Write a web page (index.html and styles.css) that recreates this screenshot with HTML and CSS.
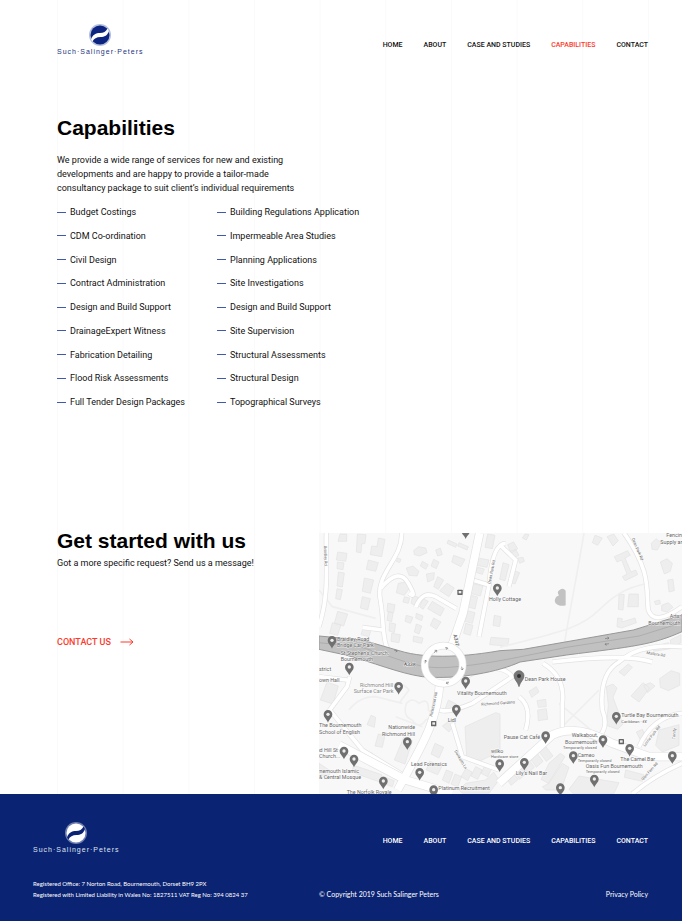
FILE: index.html
```html
<!DOCTYPE html>
<html lang="en">
<head>
<meta charset="utf-8">
<title>Capabilities – Such Salinger Peters</title>
<meta name="viewport" content="width=device-width, initial-scale=1">
<link rel="stylesheet" href="styles.css">
</head>
<body>
<div class="page">
  <header class="header">
    <a class="logo" href="#">
      <svg class="logo-mark" viewBox="0 0 44 44" aria-hidden="true">
        <circle class="logo-halo" cx="22" cy="22" r="22"/>
        <circle class="logo-disc" cx="22" cy="22" r="19"/>
        <path class="logo-wave" d="M4 31C7 21 14 18 22 18C29 18 34 15 37 9L40 14C37 23 31 26 23 26C15 26 10 29 7 35Z"/>
      </svg>
      <span class="logo-name">Such·Salinger·Peters</span>
    </a>
    <nav class="nav" aria-label="Main">
      <a href="#">HOME</a>
      <a href="#">ABOUT</a>
      <a href="#">CASE AND STUDIES</a>
      <a class="active" href="#" aria-current="page">CAPABILITIES</a>
      <a href="#">CONTACT</a>
    </nav>
  </header>

  <main>
    <section class="capabilities">
      <h1>Capabilities</h1>
      <p class="intro">We provide a wide range of services for new and existing developments and are happy to provide a tailor-made consultancy package to suit client’s individual requirements</p>
      <div class="lists">
        <ul class="list">
          <li>Budget Costings</li>
          <li>CDM Co-ordination</li>
          <li>Civil Design</li>
          <li>Contract Administration</li>
          <li>Design and Build Support</li>
          <li>DrainageExpert Witness</li>
          <li>Fabrication Detailing</li>
          <li>Flood Risk Assessments</li>
          <li>Full Tender Design Packages</li>
        </ul>
        <ul class="list">
          <li>Building Regulations Application</li>
          <li>Impermeable Area Studies</li>
          <li>Planning Applications</li>
          <li>Site Investigations</li>
          <li>Design and Build Support</li>
          <li>Site Supervision</li>
          <li>Structural Assessments</li>
          <li>Structural Design</li>
          <li>Topographical Surveys</li>
        </ul>
      </div>
    </section>

    <section class="start">
      <div class="start-text">
        <h2>Get started with us</h2>
        <p>Got a more specific request? Send us a message!</p>
        <a class="contact" href="#">CONTACT US
          <svg class="arrow" viewBox="0 0 28 16" aria-hidden="true"><path d="M1 8H26M19 2L26 8L19 14"/></svg>
        </a>
      </div>
      <svg class="map" viewBox="0 9 1089 783" role="img" aria-label="Map of Bournemouth around Dean Park House">
        <defs>
          <g id="pin"><path d="M0 24C-3 14-13 10-13-1A13 13 0 0 1 13-1C13 10 3 14 0 24Z"/><circle r="5" cy="-1" fill="#eee"/></g>
          <g id="stop"><rect x="-8" y="-8" width="16" height="16" rx="2" fill="#666"/><rect x="-4" y="-4" width="8" height="7" fill="#eee"/></g>
        </defs>
        <rect class="land" y="9" width="1089" height="783"/>

        <g class="buildings">
          <path d="M63 12h20v22h-26zM115 12l26 2-3 26-10 2-2 26-14-2zM158 48l16 2 4-26 20 4-10 52-34-6zM56 66l28 4-4 24-28-4zM55 96l20 3-3 20-18-3zM148 90l30 8-8 26-28-6zM58 126l18 3-6 42-16-3zM136 144l28 6-10 40-24-6zM54 176l16 3-6 30-14-3zM130 200l24 6-8 34-22-6zM56 244l30 8-12 36-28-8zM40 278l26 6-10 32-24-6zM134 288l24 6-8 26-24-6zM284 62l14-12 22 4 4 14-22 10-16-4zM350 60l14-6 6 20-14 4zM388 30l26 12-4 10-26-12zM420 38l28 12-4 10-28-12zM404 76l34 12-12 22-28-14zM236 84l10 4-4 10-10-4zM262 114l20-6 18 16-6 14-24-2zM310 94l18 10-8 14-16-10zM344 88l16 8-8 20-16-8zM322 132l24-4-2 20-18 8zM356 140l18 10-16 28-14-8zM384 160l22 14-16 26-28-18zM238 160l22-4 10 20-14 20-24-8zM282 196l16 6-6 26-16-8zM256 200l16 4-4 16-16-4zM312 206l16 8-16 24-10-8zM340 214l36 22-12 22-38-22zM206 220l22 4-4 24-20-4zM208 246l14 3-4 26-14-4zM262 256l20 6-8 18-16-6zM292 250l20 8-4 14-18-8zM212 278l18 4-4 26-16-5zM292 282l16 6-8 24-14-6zM344 264l22 12-14 22-18-12zM218 310l26 4-4 24-24-4zM284 318l28 6-4 16-26-6zM506 12l22 4-8 40-22-4zM478 84l32 6-6 22-30-6zM476 112l20 5-6 16-20-6zM460 160l32 8-8 30-30-8zM456 196l20 5-8 36-20-6zM446 242l22 6-8 32-22-6zM440 280l22 6-8 30-20-6zM526 256l20 4-4 30-20-4zM516 322l54 4-4 22-54-4z"/>
          <path d="M618 12l12 2-8 16-12-6zM566 44l18-8 12 20-20 14zM574 64l16-6 10 18-18 8zM596 84l16-2 4 12-14 6zM552 98l18 6-12 48-16-4zM584 122l18 6-14 34-16-6zM828 16l22 8-14 22-16-8zM864 20l20-8 14 20-16 16zM886 80l40-18 8 14-16 8 18 42 14-6 6 14-38 18-8-12 14-8-16-42-14 6zM997 40l14-14 16 12-12 22-16-2zM1024 96l20-10 16 14-6 24-18 8zM1046 150l16-2 4 34-16 4zM900 192l16 2-4 46-14-2zM930 192h28v38h-32zM1006 214l16-4 2 12-14 2zM1028 226l20-8 14 14-18 14-16-4zM896 264l14 2-2 10 40-12 4 14-44 16-14-4zM1000 350l48-12 6 18-50 8zM1054 330l32-16v24l-30 16z"/>
          <path d="M24 456l34 12-16 54-38-12zM156 556l14 6-4 30-22-8zM178 612l20 4-8 36-22-4zM138 662l22 8-8 20-20-8zM104 706l84 28-6 22-84-30zM190 738l36 14-6 18-34-12zM0 700l36 24-12 22-24-16zM254 622l26 10-22 70-32-12zM348 640l26 12-14 32-24-12zM370 588l28-20 12 10-20 28zM388 510l24 12-8 26-26-10zM332 694l36 16-12 24-34-14zM438 590l92-42 13 4v112l-58 28-42-10z"/>
          <path d="M370 750l12-30 20 8-12 32zM396 762l12-30 20 8-12 32zM426 740l14-24 20 10-14 26zM456 738l14-28 20 10-14 28zM486 730l14-28 20 10-14 28zM420 780l20-20 60-10 24-24 16 24-30 40h-80z"/>
          <path d="M630 484l22-14 8 16-22 16zM656 540l26-4 4 32-28 4zM654 512l26-4 2 22-24 2zM900 426l28-24 12 10-24 26zM936 498l36-40 20 16-32 42zM974 466l20-8 14 10-22 20zM1022 446l34-24 26 8v36l-34 16-24-10zM862 470l20-8 12 12-12 28 30 80-16 16-34-12 6-60zM952 606l18-8 14 30-16 10zM1020 600l60-16v62l-50 20-20-20zM560 740l18-16 20 24-22 18zM582 720l20-16 20 26-20 18zM606 700l20-16 20 28-20 18zM630 680l20-16 22 30-20 18zM656 660l20-16 26 34-20 16zM690 700l34-30 14 10-50 80-22-12zM670 770l20-10 40-60 20 12-24 68h-46zM750 778l30-40 120 20-16 34h-120zM920 720l54 14-4 20-54-12z"/>
        </g>

        <g class="paths">
          <path d="M795 9C770 160 750 250 730 380M543 352C700 310 780 300 840 240S940 170 985 160M720 520L840 620M840 480L700 620M0 180L40 230L170 265"/>
          <path d="M90 540Q120 500 170 500L250 520M190 470Q250 450 270 480L240 520M230 560L310 590M262 520Q280 500 300 520Q330 500 328 540Q350 560 320 570Q300 600 280 570Q250 560 262 520"/>
        </g>

        <path class="casing" d="M22 9C20 110 32 190 0 290M248 9C250 90 168 130 184 210C200 300 180 350 240 400M186 174Q240 110 268 160T270 190M290 232Q310 180 350 200L412 236M92 440L84 470L32 540L130 660L260 740M0 440L84 450M130 292L190 300M543 45L590 90L570 170M460 150L510 165L480 320M510 165Q520 40 560 40M672 400Q740 440 730 520L730 606M915 9C1000 130 980 180 988 240Q1005 290 1089 230M700 396Q920 370 1000 396M1089 350Q960 340 900 396Q840 430 850 540Q870 590 840 620M350 510Q340 570 460 520L580 440Q540 390 440 440M400 580L430 680L540 720M600 500Q640 530 620 600M960 650Q1000 560 1089 550M940 792Q1000 740 1089 700"/>
        <path class="minor" d="M22 9C20 110 32 190 0 290M248 9C250 90 168 130 184 210C200 300 180 350 240 400M186 174Q240 110 268 160T270 190M290 232Q310 180 350 200L412 236M92 440L84 470L32 540L130 660L260 740M0 440L84 450M130 292L190 300M543 45L590 90L570 170M460 150L510 165L480 320M510 165Q520 40 560 40M672 400Q740 440 730 520L730 606M915 9C1000 130 980 180 988 240Q1005 290 1089 230M700 396Q920 370 1000 396M1089 350Q960 340 900 396Q840 430 850 540Q870 590 840 620M350 510Q340 570 460 520L580 440Q540 390 440 440M400 580L430 680L540 720M600 500Q640 530 620 600M960 650Q1000 560 1089 550M940 792Q1000 740 1089 700"/>

        <path class="casing wide" d="M482 9L432 250L396 355M362 460C355 580 300 660 236 780M60 645L260 750L400 792M540 760L700 615Q770 580 880 640L990 680H1089"/>
        <path class="minor wide" d="M482 9L432 250L396 355M362 460C355 580 300 660 236 780M60 645L260 750L400 792M540 760L700 615Q770 580 880 640L990 680H1089"/>

        <path class="trunk" d="M0 318L130 330L240 362C330 390 450 378 543 362L613 358L773 330L943 300L1089 255V305C1000 345 940 350 743 375L603 396C540 425 420 450 310 440C240 430 160 396 80 375L0 358Z"/>
        <path class="trunk-line" d="M0 338L120 350C230 380 290 420 390 412S560 390 743 352L960 318L1089 278"/>
        <ellipse class="casing ring" cx="374" cy="404" rx="57" ry="57"/>
        <ellipse class="minor ring" cx="374" cy="404" rx="57" ry="57"/>
        <path class="flow" d="M225 360l10 3m-4-4l4 4-5 3M318 400l2-10m-4 4l4-4 3 5M345 368l8-7m-6 0l6 0 0 6M378 353l8 2m-4-4l4 4-5 3M428 410l2 10m-4-4l4 4 3-5M390 456l-8 4m6 2l-6-2 2-5M858 326l12-2m-5-3l5 3-4 4M870 341l-12 2m5 3l-5-3 4-4"/>

        <path d="M722 180q10-8 18 2v44q-12 4-24-2-16-8-4-24l8-4q-8-10 2-16z" fill="#c2c2c2"/>

        <g fill="#707070">
          <use href="#pin" x="440" y="3"/><use href="#pin" x="535" y="175"/><use href="#pin" x="39" y="332"/>
          <use href="#pin" x="91" y="412"/><use href="#pin" x="239" y="470"/><use href="#pin" x="440" y="454"/>
          <use href="#pin" x="412" y="538"/><use href="#pin" x="27" y="554"/><use href="#pin" x="265" y="636"/>
          <use href="#pin" x="75" y="664"/><use href="#pin" x="105" y="688"/><use href="#pin" x="193" y="754"/>
          <use href="#pin" x="302" y="728"/><use href="#pin" x="344" y="780"/><use href="#pin" x="892" y="560"/>
          <use href="#pin" x="680" y="618"/><use href="#pin" x="852" y="630"/><use href="#pin" x="932" y="656"/>
          <use href="#pin" x="763" y="678"/><use href="#pin" x="616" y="698"/><use href="#pin" x="542" y="702"/>
          <use href="#pin" x="826" y="748"/><use href="#pin" x="724" y="774"/><use href="#pin" x="1060" y="678"/>
        </g>
        <path d="M600 470C596 454 585 450 585 437A15 15 0 0 1 615 437C615 450 604 454 600 470Z" fill="#777" stroke="#666" stroke-width="2"/>
        <circle cx="600" cy="438" r="6" fill="#333"/>
        <use href="#stop" x="423" y="187"/><use href="#stop" x="344" y="581"/><use href="#stop" x="907" y="635"/>

        <g class="labels">
          <text x="510" y="213">Holly Cottage</text>
          <text x="1042" y="21">Fencing</text><text x="1024" y="41">Supply and</text>
          <text x="1052" y="265">Arts University</text><text x="988" y="284">Bournemouth</text>
          <text x="54" y="333">Braidley Road</text><text x="54" y="351">Bridge Car Park</text>
          <text x="65" y="374">St Stephen's Church,</text><text x="65" y="393">Bournemouth</text>
          <text x="0" y="422">strict</text><text x="0" y="457">own Hall</text>
          <text class="soft" x="123" y="471">Richmond Hill</text><text class="soft" x="104" y="490">Surface Car Park</text>
          <text x="414" y="494">Vitality Bournemouth</text><text x="386" y="577">Lidl</text>
          <text x="0" y="592">The Bournemouth</text><text x="0" y="612">School of English</text>
          <text x="208" y="597">Nationwide</text><text x="189" y="617">Richmond Hill</text>
          <text x="-7" y="665">nd Hill St</text><text x="0" y="684">Church...</text>
          <text x="-4" y="728">rnemouth Islamic</text><text x="0" y="747">&amp; Central Mosque</text>
          <text x="276" y="709">Lead Forensics</text><text x="83" y="792">The Norfolk Royale</text>
          <text x="358" y="780">Platinum Recruitment</text>
          <text x="617" y="452">Dean Park House</text>
          <text x="907" y="562">Turtle Bay Bournemouth</text><text class="small" x="907" y="578">Caribbean · ££</text>
          <text x="554" y="626">Pause Cat Café</text>
          <text x="758" y="621">Walkabout,</text><text x="738" y="641">Bournemouth</text><text class="small" x="732" y="656">Temporarily closed</text>
          <text x="776" y="681">Cameo</text><text class="small" x="776" y="695">Temporarily closed</text>
          <text x="904" y="694">The Camel Bar</text>
          <text x="800" y="715">Oasis Fun Bournemouth</text><text class="small" x="800" y="730">Temporarily closed</text>
          <text x="590" y="735">Lily's Nail Bar</text>
          <text x="516" y="670">wilko</text><text class="small" x="516" y="685">Hardware store</text>
          <text class="road" x="254" y="407" transform="rotate(4 254 407)">A338</text>
          <text class="road" transform="translate(403 314) rotate(78)">A347</text>
          <text class="small" transform="translate(15 48) rotate(88)">Braidley Rd</text>
          <text class="small" transform="translate(514 162) rotate(-78)">Dean Park Rd</text>
          <text class="small" transform="translate(938 26) rotate(67)">Dean Park Rd</text>
          <text class="small" transform="translate(982 372) rotate(9)">Mallera Rd</text>
          <text class="small" transform="translate(340 560) rotate(-78)">Richmond Hill</text>
          <text class="small" transform="translate(487 527) rotate(-4)">Richmond Gardens</text>
          <text class="small" transform="translate(406 664) rotate(60)">Dunkeith Ln</text>
          <text class="small" transform="translate(978 650) rotate(-52)">Lorne Park Rd</text>
          <text class="small" transform="translate(1068 628) rotate(-86)">Trinity</text>
          <text class="small" transform="translate(972 752) rotate(-48)">Glen Fern Rd</text>
        </g>
      </svg>
    </section>
  </main>
</div>

<footer class="footer">
  <div class="footer-top">
    <a class="logo logo-light" href="#">
      <svg class="logo-mark" viewBox="0 0 44 44" aria-hidden="true">
        <circle class="logo-halo" cx="22" cy="22" r="22"/>
        <circle class="logo-disc" cx="22" cy="22" r="19"/>
        <path class="logo-wave" d="M4 31C7 21 14 18 22 18C29 18 34 15 37 9L40 14C37 23 31 26 23 26C15 26 10 29 7 35Z"/>
      </svg>
      <span class="logo-name">Such·Salinger·Peters</span>
    </a>
    <nav class="nav" aria-label="Footer">
      <a href="#">HOME</a>
      <a href="#">ABOUT</a>
      <a href="#">CASE AND STUDIES</a>
      <a href="#">CAPABILITIES</a>
      <a href="#">CONTACT</a>
    </nav>
  </div>
  <div class="footer-bottom">
    <p class="registered">Registered Office: 7 Norton Road, Bournemouth, Dorset BH9 2PX<br>Registered with Limited Liability in Wales No: 1827511 VAT Reg No: 394 0824 37</p>
    <div class="legal">
      <p>© Copyright 2019 Such Salinger Peters</p>
      <a href="#">Privacy Policy</a>
    </div>
  </div>
</footer>
</body>
</html>
```
FILE: styles.css
```css
:root {
  --navy: #0b2373;
  --red: #fb3a2c;
  --gutter-left: 57px;
  --gutter-right: 34px;
}

* {
  box-sizing: border-box;
}

body {
  margin: 0;
  background: #fff;
  color: #111;
  font: 9px/14px Roboto, "Liberation Sans", sans-serif;
}

h1, h2, p, ul {
  margin: 0;
  padding: 0;
}

a {
  color: inherit;
  text-decoration: none;
}

.page {
  position: relative;
  isolation: isolate;
}

/* faint column guides behind the content */
.page::before {
  content: "";
  position: absolute;
  z-index: -1;
  inset: 0 calc(var(--gutter-right) - 1px) 0 var(--gutter-left);
  border-right: 1px solid #fafafa;
  background: linear-gradient(to right, #fafafa 1px, transparent 1px) 0 0 / calc(100% / 9) 100%;
}

.header {
  display: flex;
  align-items: center;
  justify-content: space-between;
  padding: 24px var(--gutter-right) 0 var(--gutter-left);
}

.logo {
  display: flex;
  flex-direction: column;
  align-items: center;
  color: #1d3280;
}

.logo-mark {
  width: 22px;
  height: 22px;
}

.logo-halo { fill: #b3bfdd; }
.logo-disc { fill: #0d2580; }
.logo-wave { fill: #fff; }

.logo-name {
  font: 7px/12px "Liberation Sans", sans-serif;
  letter-spacing: 1px;
  white-space: nowrap;
}

.logo-light { color: #dfe4f2; }
.logo-light .logo-halo { fill: #6f7eb0; }
.logo-light .logo-disc { fill: #fff; }
.logo-light .logo-wave { fill: var(--navy); }

.nav {
  display: flex;
  gap: 21px;
  padding-top: 8px;
  font-size: 7px;
  font-weight: 500;
  line-height: 12px;
  white-space: nowrap;
}

.nav .active {
  color: var(--red);
}

.capabilities {
  padding: 56px var(--gutter-right) 0 var(--gutter-left);
}

h1, h2 {
  color: #000;
  font: bold 21px/28px "Liberation Sans", sans-serif;
}

.intro {
  max-width: 240px;
  margin-top: 11px;
}

.lists {
  display: grid;
  grid-template-columns: 160px 160px;
  margin-top: 10px;
}

.list {
  display: flex;
  flex-direction: column;
  justify-content: space-between;
  height: 204px;
  list-style: none;
  white-space: nowrap;
}

.list li {
  display: flex;
  align-items: center;
  gap: 4px;
}

.list li::before {
  content: "";
  width: 9px;
  height: 1px;
  background: #4258ac;
}

.start {
  display: grid;
  grid-template-columns: 319fr 363fr;
  margin-top: 124px;
}

.start-text {
  padding-left: var(--gutter-left);
}

.start-text h2 {
  line-height: 16px;
}

.start-text p {
  margin-top: 7px;
}

.contact {
  display: inline-flex;
  align-items: center;
  gap: 9px;
  margin-top: 65px;
  color: var(--red);
  font-weight: 500;
}

.arrow {
  width: 14px;
  height: 8px;
  fill: none;
  stroke: currentColor;
  stroke-width: 2;
}

.map {
  display: block;
  width: 100%;
  font-family: Roboto, sans-serif;
}

.land { fill: #f8f8f8; }
.buildings { fill: #eee; stroke: #e2e2e2; stroke-width: 2; }
.paths { fill: none; stroke: #efefef; stroke-width: 5; }
.casing { fill: none; stroke: #e2e2e2; stroke-width: 15; }
.minor { fill: none; stroke: #fff; stroke-width: 11; }
.casing.wide { stroke-width: 27; }
.minor.wide { stroke-width: 23; }
.casing.ring { stroke-width: 23; }
.minor.ring { stroke-width: 19; }
.trunk { fill: #c1c1c1; stroke: #989898; stroke-width: 3; }
.trunk-line { fill: none; stroke: #a3a3a3; stroke-width: 2; }
.flow { fill: none; stroke: #777; stroke-width: 2; }

.labels {
  fill: #666;
  stroke: #fff;
  stroke-opacity: 0.7;
  stroke-width: 3;
  paint-order: stroke;
  font-size: 16px;
}

.labels .soft { fill: #888; }
.labels .small { font-size: 12px; }
.labels .road { font-size: 15px; font-weight: 500; }

.footer {
  padding: 28px var(--gutter-right) 21px 33px;
  background: var(--navy);
  color: #fff;
}

.footer-top {
  display: flex;
  align-items: center;
  justify-content: space-between;
}

.footer .nav {
  padding-top: 4px;
}

.footer-bottom {
  display: grid;
  grid-template-columns: 286fr 329fr;
  align-items: end;
  margin-top: 22px;
  font: 6px/11px Lato, sans-serif;
  white-space: nowrap;
}

.legal {
  display: flex;
  justify-content: space-between;
  font-size: 7px;
}
```
